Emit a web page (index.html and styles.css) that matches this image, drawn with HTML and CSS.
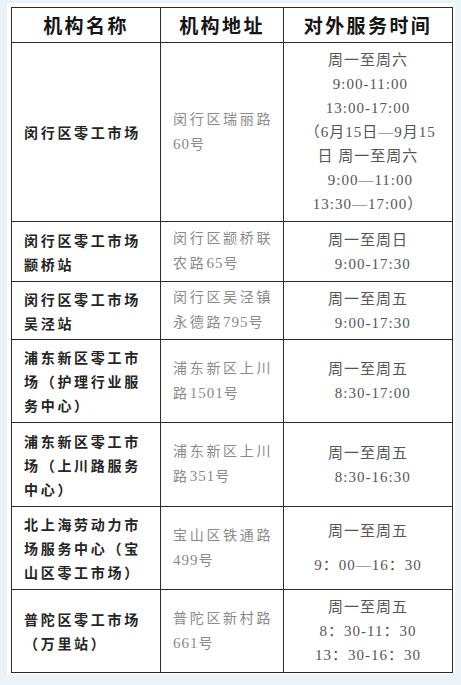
FILE: index.html
```html
<!DOCTYPE html>
<html lang="zh">
<head>
<meta charset="utf-8">
<title>零工市场</title>
<link rel="stylesheet" href="styles.css">
</head>
<body>
<div class="panel">
<table class="sheet">
  <colgroup>
    <col class="c-name">
    <col class="c-addr">
    <col class="c-time">
  </colgroup>
  <thead>
    <tr class="r-head">
      <th>机构名称</th>
      <th>机构地址</th>
      <th>对外服务时间</th>
    </tr>
  </thead>
  <tbody>
    <tr class="r1">
      <td class="name">闵行区零工市场</td>
      <td class="addr">闵行区瑞丽路<br><span class="num">60</span>号</td>
      <td class="time">周一至周六<br>&nbsp;9:00-11:00<br>13:00-17:00<br>&nbsp;（6月15日—9月15<br>日 周一至周六<br>&nbsp;9:00—11:00<br>13:30—17:00）</td>
    </tr>
    <tr class="r2">
      <td class="name">闵行区零工市场<br>颛桥站</td>
      <td class="addr">闵行区颛桥联<br>农路<span class="num">65</span>号</td>
      <td class="time">周一至周日<br>&nbsp;&nbsp;9:00-17:30</td>
    </tr>
    <tr class="r3">
      <td class="name">闵行区零工市场<br>吴泾站</td>
      <td class="addr">闵行区吴泾镇<br>永德路<span class="num">795</span>号</td>
      <td class="time">周一至周五<br>&nbsp;&nbsp;9:00-17:30</td>
    </tr>
    <tr class="r4">
      <td class="name">浦东新区零工市<br>场（护理行业服<br>务中心）</td>
      <td class="addr">浦东新区上川<br>路<span class="num">1501</span>号</td>
      <td class="time">周一至周五<br>&nbsp;&nbsp;8:30-17:00</td>
    </tr>
    <tr class="r5">
      <td class="name">浦东新区零工市<br>场（上川路服务<br>中心）</td>
      <td class="addr">浦东新区上川<br>路<span class="num">351</span>号</td>
      <td class="time">周一至周五<br>&nbsp;&nbsp;8:30-16:30</td>
    </tr>
    <tr class="r6">
      <td class="name">北上海劳动力市<br>场服务中心（宝<br>山区零工市场）</td>
      <td class="addr">宝山区铁通路<br><span class="num">499</span>号</td>
      <td class="time"><p class="para">周一至周五</p><p class="para">9：00—16：30</p></td>
    </tr>
    <tr class="r7">
      <td class="name">普陀区零工市场<br>（万里站）</td>
      <td class="addr">普陀区新村路<br><span class="num">661</span>号</td>
      <td class="time">周一至周五<br>8：30-11：30<br>13：30-16：30</td>
    </tr>
  </tbody>
</table>
</div>
</body>
</html>
```

FILE: styles.css
```css
html, body {
  margin: 0;
  padding: 0;
  background: #e9f3f8;
}

body {
  padding: 3px 0 0 7px;
  font-family: "Noto Sans CJK SC", "Noto Sans", sans-serif;
}

.panel {
  width: 444px;
  height: 668px;
  background: #ffffff;
  padding: 4px 0 0 4px;
}

.sheet {
  border-collapse: collapse;
  table-layout: fixed;
  width: 441px;
}

.c-name { width: 149px; }
.c-addr { width: 123px; }
.c-time { width: 169px; }

.sheet th,
.sheet td {
  border: 1px solid #2b2b2b;
  padding: 0 12px;
  vertical-align: middle;
  white-space: nowrap;
  line-height: 24px;
}

.sheet th {
  font-family: "Noto Sans CJK SC", sans-serif;
  font-weight: 700;
  font-size: 19px;
  letter-spacing: 2.4px;
  color: #151515;
  text-align: center;
  padding: 0;
}

.r-head { height: 35px; }
.r1 { height: 179px; }
.r2 { height: 60px; }
.r3 { height: 58px; }
.r4 { height: 83px; }
.r5 { height: 84px; }
.r6 { height: 83px; }
.r7 { height: 83px; }

.name {
  font-family: "Noto Sans CJK SC", sans-serif;
  font-weight: 700;
  font-size: 14px;
  letter-spacing: 2.7px;
  color: #242424;
  text-align: left;
}

.addr {
  font-family: "Liberation Serif", "Noto Sans CJK SC", serif;
  font-size: 14px;
  letter-spacing: 2.7px;
  color: #8a8a8a;
  text-align: left;
}

.num {
  font-size: 15px;
  letter-spacing: 1px;
}

.time {
  font-family: "Liberation Serif", "Noto Sans CJK SC", serif;
  font-size: 15px;
  letter-spacing: 1px;
  color: #555555;
  text-align: center;
  padding: 0 4px;
}

.para {
  margin: 0;
  line-height: 24px;
}

.para + .para {
  margin-top: 10px;
}
```
